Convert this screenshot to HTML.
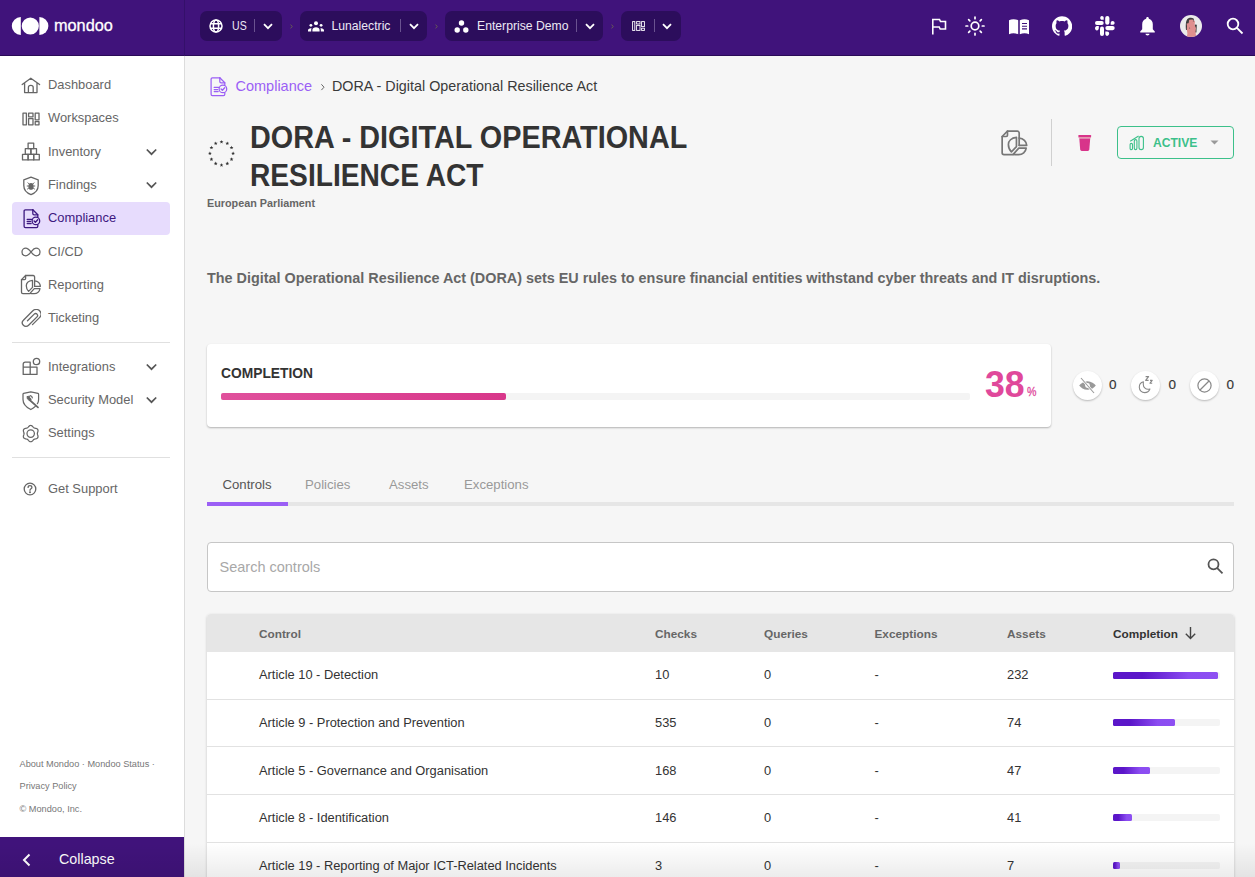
<!DOCTYPE html>
<html><head><meta charset="utf-8">
<style>
*{box-sizing:border-box;margin:0;padding:0}
html,body{width:1255px;height:877px;overflow:hidden;background:#f6f6f6;font-family:"Liberation Sans",sans-serif;position:relative}
.a{position:absolute;white-space:nowrap}
#hdr{position:absolute;left:0;top:0;width:1255px;height:56px;background:#40137b;border-bottom:1px solid #2a0a57}
#side{position:absolute;left:0;top:56px;width:185px;height:821px;background:#fff;border-right:1px solid #dcdcdc}
.pill{position:absolute;top:11px;height:30px;border-radius:7px;background:#2c0d5c}
.ptxt{position:absolute;top:0;line-height:30px;font-size:12.2px;color:#ece8f4}
.pdiv{position:absolute;top:8px;width:1px;height:13px;background:#6a5290}
.sep{position:absolute;top:22px;color:#7d7a5a;font-size:9px}
.nav{position:absolute;left:48px;font-size:12.9px;color:#666;line-height:16px}
.chev{position:absolute;left:145px}
.hdiv{position:absolute;left:12px;width:158px;height:1px;background:#e0e0e0}
.foot{position:absolute;left:19.5px;font-size:9.2px;color:#777}
.th{position:absolute;top:626px;font-size:11.8px;font-weight:bold;color:#666;line-height:16px}
.td{position:absolute;font-size:12.85px;color:#333;line-height:16px}
.rowline{position:absolute;left:207px;width:1027px;height:1px;background:#e2e2e2}
.bar{position:absolute;left:1113px;height:7px;border-radius:1.5px;background:linear-gradient(90deg,#5b16c9 0%,#5b16c9 28%,#8b4cf1 72%,#8d4ff2 100%)}
.track{position:absolute;left:1113px;width:107px;height:7px;border-radius:2px;background:#f4f4f4}
</style></head><body>
<div id="hdr">
<svg class="a" style="left:0;top:0" width="120" height="56" viewBox="0 0 120 56">
<path d="M20.8 17 A9 9 0 0 0 20.8 35 Z" fill="#fff"/>
<circle cx="30.3" cy="26" r="8.6" fill="#fff"/>
<path d="M39.4 17 A9 9 0 0 1 39.4 35 Z" fill="#fff"/>
</svg>
<div class="a" style="left:54px;top:16px;font-size:16.3px;line-height:18px;color:#fff;-webkit-text-stroke:0.3px #fff">mondoo</div>
<div style="position:absolute;left:184px;top:0;width:1px;height:56px;background:#34106a"></div>

<div class="pill" style="left:200px;width:82px">
 <svg class="a" style="left:9px;top:8px" width="14" height="14" viewBox="0 0 14 14" fill="none" stroke="#fff" stroke-width="1.5"><circle cx="7" cy="7" r="6"/><ellipse cx="7" cy="7" rx="2.6" ry="6"/><path d="M1.3 4.8H12.7M1.3 9.2H12.7"/></svg>
 <div class="ptxt" style="left:31.5px;font-size:12px;transform-origin:0 0;transform:scaleX(0.88)">US</div>
 <div class="pdiv" style="left:54px"></div>
 <svg class="a" style="left:63px;top:12px" width="10" height="7" viewBox="0 0 10 7" fill="none" stroke="#fff" stroke-width="1.8"><path d="M1 1.2L5 5.2L9 1.2"/></svg>
</div>
<svg class="a" style="left:289px;top:23px" width="5" height="7" viewBox="0 0 5 7" fill="none" stroke="#6a6250" stroke-width="0.9"><path d="M1.6 1.6L3.2 3.5L1.6 5.4"/></svg>

<div class="pill" style="left:300px;width:127px">
 <svg class="a" style="left:8px;top:10px" width="16" height="11" viewBox="0 0 16 11" fill="#fff"><circle cx="8" cy="2.3" r="2"/><circle cx="2.9" cy="4.3" r="1.4"/><circle cx="13.1" cy="4.3" r="1.4"/><path d="M4.4 10.4V8.8C4.4 7.2 6 6.2 8 6.2S11.6 7.2 11.6 8.8V10.4Z"/><path d="M0 10.4V9.4C0 8.2 1.2 7.2 2.8 7.2C3.2 7.2 3.5 7.3 3.6 7.3C3.3 7.8 3.2 8.3 3.2 8.8V10.4Z"/><path d="M16 10.4V9.4C16 8.2 14.8 7.2 13.2 7.2C12.8 7.2 12.5 7.3 12.4 7.3C12.7 7.8 12.8 8.3 12.8 8.8V10.4Z"/></svg>
 <div class="ptxt" style="left:31.5px">Lunalectric</div>
 <div class="pdiv" style="left:100px"></div>
 <svg class="a" style="left:109px;top:12px" width="10" height="7" viewBox="0 0 10 7" fill="none" stroke="#fff" stroke-width="1.8"><path d="M1 1.2L5 5.2L9 1.2"/></svg>
</div>
<svg class="a" style="left:434px;top:23px" width="5" height="7" viewBox="0 0 5 7" fill="none" stroke="#6a6250" stroke-width="0.9"><path d="M1.6 1.6L3.2 3.5L1.6 5.4"/></svg>

<div class="pill" style="left:445px;width:158px">
 <svg class="a" style="left:8.5px;top:7.5px" width="15" height="15" viewBox="0 0 15 15" fill="#fff"><circle cx="7.5" cy="4" r="2.7"/><circle cx="3.2" cy="11" r="2.7"/><circle cx="11.8" cy="11" r="2.7"/></svg>
 <div class="ptxt" style="left:32px">Enterprise Demo</div>
 <div class="pdiv" style="left:131px"></div>
 <svg class="a" style="left:140px;top:12px" width="10" height="7" viewBox="0 0 10 7" fill="none" stroke="#fff" stroke-width="1.8"><path d="M1 1.2L5 5.2L9 1.2"/></svg>
</div>
<svg class="a" style="left:610px;top:23px" width="5" height="7" viewBox="0 0 5 7" fill="none" stroke="#6a6250" stroke-width="0.9"><path d="M1.6 1.6L3.2 3.5L1.6 5.4"/></svg>

<div class="pill" style="left:621px;width:60px">
 <svg class="a" style="left:11px;top:10px" width="13" height="10" viewBox="0 0 13 10" fill="none" stroke="#fff" stroke-width="0.9"><rect x="0.6" y="0.6" width="2.2" height="8.8"/><rect x="4.6" y="0.6" width="3.4" height="2.4"/><rect x="4.6" y="4.4" width="3.4" height="5"/><rect x="9.6" y="0.6" width="2.8" height="5"/><rect x="9.6" y="7.2" width="2.8" height="2.2"/></svg>
 <div class="pdiv" style="left:33px"></div>
 <svg class="a" style="left:41px;top:12px" width="10" height="7" viewBox="0 0 10 7" fill="none" stroke="#fff" stroke-width="1.8"><path d="M1 1.2L5 5.2L9 1.2"/></svg>
</div>

<!-- right icons -->
<svg class="a" style="left:931px;top:18px" width="16" height="17" viewBox="0 0 16 17" fill="none" stroke="#fff" stroke-width="1.6"><path d="M1.8 16.5V1.5H8.5L9.5 3.5H14.5V11H9.2L8.2 9H1.8"/></svg>
<svg class="a" style="left:964px;top:15px" width="22" height="22" viewBox="0 0 22 22" fill="none" stroke="#fff" stroke-width="1.7" stroke-linecap="round"><circle cx="11" cy="11" r="3.8"/><path d="M11.00 3.70L11.00 2.00M16.16 5.84L17.36 4.64M18.30 11.00L20.00 11.00M16.16 16.16L17.36 17.36M11.00 18.30L11.00 20.00M5.84 16.16L4.64 17.36M3.70 11.00L2.00 11.00M5.84 5.84L4.64 4.64"/></svg>
<svg class="a" style="left:1008px;top:18px" width="22" height="17" viewBox="0 0 22 17" fill="#fff"><path d="M1 2.2C3.5 1 7 0.8 10.2 2.2V16.2C7 15 3.5 15.1 1 16.2Z"/><path d="M11.8 2.2C15 0.8 18.5 1 21 2.2V16.2C18.5 15.1 15 15 11.8 16.2Z"/><path d="M14 5.5H19M14 8.2H19M14 10.9H19" stroke="#40137b" stroke-width="1.1"/></svg>
<svg class="a" style="left:1052px;top:16px" width="20" height="20" viewBox="0 0 16 16" fill="#fff"><path d="M8 0.2C3.6 0.2 0 3.8 0 8.2c0 3.5 2.3 6.5 5.5 7.6.4.1.5-.2.5-.4v-1.4c-2.2.5-2.7-1-2.7-1-.4-.9-.9-1.2-.9-1.2-.7-.5.1-.5.1-.5.8.1 1.2.8 1.2.8.7 1.2 1.9.9 2.3.7.1-.5.3-.9.5-1.1-1.8-.2-3.6-.9-3.6-4 0-.9.3-1.6.8-2.1-.1-.2-.4-1 .1-2.1 0 0 .7-.2 2.2.8.6-.2 1.3-.3 2-.3s1.4.1 2 .3c1.5-1 2.2-.8 2.2-.8.4 1.1.2 1.9.1 2.1.5.6.8 1.3.8 2.1 0 3.1-1.9 3.8-3.6 4 .3.3.6.8.6 1.5v2.2c0 .2.1.5.6.4 3.2-1.1 5.5-4.1 5.5-7.6C16 3.8 12.4 0.2 8 0.2z"/></svg>
<svg class="a" style="left:1095px;top:16px" width="20" height="20" viewBox="0 0 20 20" fill="#fff">
<path d="M8.7 3.7H6.9C5.9 3.7 5.2 2.9 5.2 1.9S5.9 0 6.9 0S8.7 0.8 8.7 1.8Z"/>
<rect x="10.2" y="0" width="4.2" height="8.8" rx="2.1"/>
<rect x="0" y="5.1" width="8.7" height="3.8" rx="1.9"/>
<path d="M15.7 8.8V7C15.7 6 16.5 5.1 17.6 5.1S19.6 6 19.6 7S18.7 8.8 17.6 8.8Z"/>
<path d="M3.8 10V12.3C3.8 13.5 3 14.4 1.9 14.4S0 13.5 0 12.3S0.9 10 1.9 10Z"/>
<rect x="5" y="10.4" width="4" height="9.5" rx="2"/>
<rect x="10.3" y="10" width="9.4" height="4.2" rx="2.1"/>
<path d="M10.3 15.5H12.2C13.3 15.5 14.2 16.4 14.2 17.6S13.3 19.9 12.2 19.9S10.3 19 10.3 17.6Z"/>
</svg>
<svg class="a" style="left:1139px;top:16px" width="17" height="20" viewBox="0 0 17 20" fill="#fff"><path d="M8.5 1C9.3 1 9.8 1.6 9.8 2.3V2.8C12.3 3.4 13.8 5.6 13.8 8.2V13.3L15.8 15.5V16.5H1.2V15.5L3.2 13.3V8.2C3.2 5.6 4.7 3.4 7.2 2.8V2.3C7.2 1.6 7.7 1 8.5 1Z"/><path d="M6.5 17.8H10.5C10.5 18.9 9.6 19.5 8.5 19.5S6.5 18.9 6.5 17.8Z"/></svg>
<svg class="a" style="left:1180px;top:15px" width="22" height="22" viewBox="0 0 22 22"><defs><clipPath id="av"><circle cx="11" cy="11" r="11"/></clipPath></defs><g clip-path="url(#av)"><rect width="22" height="22" fill="#ebebeb"/><path d="M6 15C5.6 11 5.6 6 7.4 4C9 2.4 12 2.2 13.6 3.6L14.2 6L8.6 8.5L8.4 15Z" fill="#3e3e3e"/><path d="M14.6 9.5L16.8 9.8L16.4 17.5L14.6 17.5Z" fill="#3e3e3e"/><path d="M9.2 4.8L12.4 4.4L15 6.2L14.6 10L16 13L15.5 17L16.4 23H6.6L7.4 18.5L6.8 14.5L7 11L6.6 8.6L8.6 8.2Z" fill="#df8f8e"/><circle cx="13.4" cy="6" r="0.5" fill="#555"/><circle cx="9.6" cy="13" r="0.5" fill="#555"/></g></svg>
<svg class="a" style="left:1226px;top:17px" width="18" height="18" viewBox="0 0 18 18" fill="none" stroke="#fff" stroke-width="1.8"><circle cx="7" cy="7" r="5.3"/><path d="M10.9 10.9L16.5 16.5"/></svg>
</div>
<div id="side"></div>
<svg class="a" style="left:21px;top:77px" width="20" height="17" viewBox="0 0 20 17" stroke="#666" stroke-width="1.3" fill="none" stroke-linejoin="round" stroke-linecap="round"><path d="M1.2 7.5L9.8 1.2L18.6 7.5M3.6 6V15.6H16V6M7.4 15.6V10.4C7.4 9.3 8.3 8.3 9.8 8.3S12.2 9.3 12.2 10.4V15.6"/></svg>
<div class="nav" style="top:76.6px">Dashboard</div>
<svg class="a" style="left:22px;top:112px" width="18" height="14" viewBox="0 0 18 14" stroke="#666" stroke-width="1.3" fill="none" stroke-linejoin="round" stroke-linecap="round" stroke-width="1.1"><rect x="1" y="1.2" width="3.4" height="11.6"/><rect x="6.6" y="1.2" width="4.4" height="3.6"/><rect x="6.6" y="6.6" width="4.4" height="6.2"/><rect x="13.2" y="1.2" width="3.8" height="6.6"/><rect x="13.2" y="9.6" width="3.8" height="3.2"/></svg>
<div class="nav" style="top:110px">Workspaces</div>
<svg class="a" style="left:21px;top:142px" width="20" height="19" viewBox="0 0 20 19" stroke="#666" stroke-width="1.3" fill="none" stroke-linejoin="round" stroke-linecap="round" stroke-width="1.1"><rect x="1.5" y="12.3" width="5.6" height="5.6"/><rect x="7.1" y="12.3" width="5.6" height="5.6"/><rect x="12.7" y="12.3" width="5.6" height="5.6"/><rect x="4.3" y="6.7" width="5.6" height="5.6"/><rect x="9.9" y="6.7" width="5.6" height="5.6"/><rect x="7.1" y="1.1" width="5.6" height="5.6"/></svg>
<div class="nav" style="top:143.7px">Inventory</div>
<svg class="a" style="left:145px;top:148.2px" width="13" height="8" viewBox="0 0 13 8" fill="none" stroke="#555" stroke-width="1.7"><path d="M1.8 1.5L6.5 6.2L11.2 1.5"/></svg>
<svg class="a" style="left:22px;top:176px" width="18" height="20" viewBox="0 0 18 20" stroke="#666" stroke-width="1.3" fill="none" stroke-linejoin="round" stroke-linecap="round"><path d="M9 1.2L16.2 3.8V9.6C16.2 14 13 17.2 9 18.6C5 17.2 1.8 14 1.8 9.6V3.8Z"/><ellipse cx="9" cy="10.4" rx="2.6" ry="3.4" fill="#666" stroke="none"/><path d="M6 6.8L7.2 8M12 6.8L10.8 8M5.2 10H6.4M11.6 10H12.8M5.5 13L6.6 12.2M12.5 13L11.4 12.2" stroke-width="1"/></svg>
<div class="nav" style="top:176.7px">Findings</div>
<svg class="a" style="left:145px;top:181.2px" width="13" height="8" viewBox="0 0 13 8" fill="none" stroke="#555" stroke-width="1.7"><path d="M1.8 1.5L6.5 6.2L11.2 1.5"/></svg>
<div class="a" style="left:12px;top:202px;width:158px;height:33px;background:#e7dcfd;border-radius:4px"></div>
<svg class="a" style="left:22px;top:208px" width="20" height="21" viewBox="0 0 20 21" fill="none" stroke="#3d1880" stroke-width="1.3" stroke-linejoin="round" stroke-linecap="round"><path d="M10.8 1.8H3.4C2.6 1.8 2.1 2.3 2.1 3.1V18.3C2.1 19.1 2.6 19.6 3.4 19.6H14.5C15.3 19.6 15.8 19.1 15.8 18.3V16.6"/><path d="M10.8 1.8L15.8 6.8V9.1"/><path d="M10.8 1.8V5.5C10.8 6.2 11.4 6.8 12.1 6.8H15.8"/><path d="M5.2 11.4H9.6M5.2 13.5H8.6M5.2 15.6H9.2"/><circle cx="13.9" cy="12.9" r="3.8" fill="#e7dcfd"/><path d="M12.1 12.9L13.4 14.2L15.7 11.8" stroke-width="1.4"/></svg>
<div class="nav" style="top:210px;color:#3d1880">Compliance</div>
<svg class="a" style="left:21px;top:247px" width="20" height="10" viewBox="0 0 20 10" stroke="#666" stroke-width="1.3" fill="none" stroke-linejoin="round" stroke-linecap="round" stroke-width="1.4"><path d="M10 5C8 2.5 6.8 1.2 4.8 1.2S1 2.8 1 5S2.6 8.8 4.8 8.8S8 7.5 10 5S12.8 1.2 15 1.2S19 2.8 19 5S17.4 8.8 15.2 8.8S12 7.5 10 5Z"/></svg>
<div class="nav" style="top:243.5px">CI/CD</div>
<svg class="a" style="left:16px;top:270px" width="30" height="30" viewBox="0 0 30 30" stroke="#666" stroke-width="1.3" fill="none" stroke-linejoin="round" stroke-linecap="round"><path d="M18.6 16.4V7C18.6 6.2 18 5.5 17.2 5.5H9.6L5.5 9.6V22.2C5.5 23 6.1 23.6 6.9 23.6H13.8"/><path d="M9.6 5.5V8.6C9.6 9.1 9.2 9.6 8.6 9.6H5.5"/><path d="M18.6 10.8C21.8 11 24.2 13.4 24.4 16.4H18.6"/><path d="M16.5 10.3V17.4L12.6 21.4C11.2 20 10.3 18 10.3 15.8C10.3 13 12.6 10.7 16.5 10.3Z"/><path d="M14 23.4L18.3 18.6H24C23.6 21.4 21.2 23.6 18.2 23.6C16.8 23.6 15.4 23.6 14 23.4Z"/></svg>
<div class="nav" style="top:276.6px">Reporting</div>
<svg class="a" style="left:21px;top:309px" width="20" height="19" viewBox="0 0 20 19" stroke="#666" stroke-width="1.3" fill="none" stroke-linejoin="round" stroke-linecap="round" stroke-width="1.2"><path d="M6.5 11.8L13.2 5.1C14 4.3 15.3 4.3 16 5.1S16.8 7.1 16 7.9L7.6 16.3C6.1 17.8 3.8 17.8 2.4 16.3S0.9 12.6 2.4 11.2L11.6 2C13.7-0.1 17-0.1 18.8 2S20.3 6.8 18.5 8.6L11.5 15.6"/></svg>
<div class="nav" style="top:310px">Ticketing</div>
<svg class="a" style="left:22px;top:357px" width="19" height="19" viewBox="0 0 19 19" stroke="#666" stroke-width="1.3" fill="none" stroke-linejoin="round" stroke-linecap="round" stroke-width="1.2"><path d="M1.2 10.2V17.4H15V10.2H8.2V5.2H3.2C2 5.2 1.2 6 1.2 7.2V10.2H8.2V17.4"/><circle cx="14.5" cy="4.5" r="3.2"/></svg>
<div class="nav" style="top:358.7px">Integrations</div>
<svg class="a" style="left:145px;top:363.2px" width="13" height="8" viewBox="0 0 13 8" fill="none" stroke="#555" stroke-width="1.7"><path d="M1.8 1.5L6.5 6.2L11.2 1.5"/></svg>
<svg class="a" style="left:22px;top:390px" width="18" height="21" viewBox="0 0 18 21" stroke="#666" stroke-width="1.25" fill="none" stroke-linejoin="round" stroke-linecap="round"><path d="M15.4 13.6C16.2 12.3 16.6 10.9 16.6 9.4V4.2C16.6 3.8 16.4 3.5 16 3.4L8.8 1.9L1.6 3.4C1.2 3.5 1 3.8 1 4.2V9.4C1 13.6 4.2 17.2 8.8 19.5C10.6 18.6 12.1 17.6 13.3 16.4"/><path d="M7.6 10L16 17.4" stroke-width="1.7"/><path d="M5.3 6.6C4.9 7.6 5.2 8.9 6.1 9.6C6.9 10.3 8.1 10.5 9.1 10.1L8.8 8.6L7.6 7.8L7.6 6.4C6.7 6.2 5.9 6.3 5.3 6.6Z" fill="#666" stroke-width="1"/><path d="M8.2 5.6C9.3 5.8 10.2 6.7 10.3 7.8" stroke-width="1.3"/></svg>
<div class="nav" style="top:392px">Security Model</div>
<svg class="a" style="left:145px;top:395.8px" width="13" height="8" viewBox="0 0 13 8" fill="none" stroke="#555" stroke-width="1.7"><path d="M1.8 1.5L6.5 6.2L11.2 1.5"/></svg>
<svg class="a" style="left:21px;top:424px" width="20" height="20" viewBox="0 0 20 20" stroke="#666" stroke-width="1.25" fill="none" stroke-linejoin="round"><path d="M16.35 9.60 L16.38 9.25 L16.46 8.89 L16.57 8.51 L16.71 8.11 L16.85 7.68 L16.96 7.24 L17.02 6.79 L17.01 6.34 L16.93 5.92 L16.76 5.53 L16.50 5.18 L16.18 4.89 L15.79 4.67 L15.37 4.49 L14.93 4.37 L14.50 4.27 L14.08 4.19 L13.69 4.10 L13.34 3.99 L13.03 3.84 L12.74 3.64 L12.46 3.39 L12.19 3.10 L11.92 2.78 L11.62 2.45 L11.29 2.14 L10.93 1.86 L10.54 1.64 L10.12 1.50 L9.70 1.45 L9.28 1.50 L8.86 1.64 L8.47 1.86 L8.11 2.14 L7.78 2.45 L7.48 2.78 L7.21 3.10 L6.94 3.39 L6.66 3.64 L6.38 3.84 L6.06 3.99 L5.71 4.10 L5.32 4.19 L4.90 4.27 L4.47 4.37 L4.03 4.49 L3.61 4.67 L3.22 4.89 L2.90 5.18 L2.64 5.53 L2.47 5.92 L2.39 6.34 L2.38 6.79 L2.44 7.24 L2.55 7.68 L2.69 8.11 L2.83 8.51 L2.94 8.89 L3.02 9.25 L3.05 9.60 L3.02 9.95 L2.94 10.31 L2.83 10.69 L2.69 11.09 L2.55 11.52 L2.44 11.96 L2.38 12.41 L2.39 12.86 L2.47 13.28 L2.64 13.67 L2.90 14.02 L3.22 14.31 L3.61 14.53 L4.03 14.71 L4.47 14.83 L4.90 14.93 L5.32 15.01 L5.71 15.10 L6.06 15.21 L6.37 15.36 L6.66 15.56 L6.94 15.81 L7.21 16.10 L7.48 16.42 L7.78 16.75 L8.11 17.06 L8.47 17.34 L8.86 17.56 L9.28 17.70 L9.70 17.75 L10.12 17.70 L10.54 17.56 L10.93 17.34 L11.29 17.06 L11.62 16.75 L11.92 16.42 L12.19 16.10 L12.46 15.81 L12.74 15.56 L13.03 15.36 L13.34 15.21 L13.69 15.10 L14.08 15.01 L14.50 14.93 L14.93 14.83 L15.37 14.71 L15.79 14.53 L16.18 14.31 L16.50 14.02 L16.76 13.67 L16.93 13.28 L17.01 12.86 L17.02 12.41 L16.96 11.96 L16.85 11.52 L16.71 11.09 L16.57 10.69 L16.46 10.31 L16.38 9.95 L16.35 9.60Z"/><circle cx="9.7" cy="9.6" r="3.7"/></svg>
<div class="nav" style="top:424.8px">Settings</div>
<svg class="a" style="left:23px;top:482px" width="14" height="14" viewBox="0 0 14 14" stroke="#666" stroke-width="1.3" fill="none" stroke-linejoin="round" stroke-linecap="round" stroke-width="1.1"><circle cx="7" cy="7" r="5.8"/><path d="M5.1 5.4C5.1 4.3 6 3.6 7 3.6S8.9 4.3 8.9 5.4C8.9 6.8 7 6.8 7 8.3"/><circle cx="7" cy="10.2" r="0.4" fill="#666"/></svg>
<div class="nav" style="top:480.8px">Get Support</div>
<div class="hdiv" style="top:342px"></div>
<div class="hdiv" style="top:457px"></div>
<div class="foot" style="top:759px">About Mondoo · Mondoo Status ·</div>
<div class="foot" style="top:781px">Privacy Policy</div>
<div class="foot" style="top:804px">© Mondoo, Inc.</div>
<div class="a" style="left:0;top:837px;width:184px;height:40px;background:#40137b"></div>
<svg class="a" style="left:21px;top:853px" width="11" height="14" viewBox="0 0 11 14" fill="none" stroke="#fff" stroke-width="2"><path d="M8.5 1.5L3 7L8.5 12.5"/></svg>
<div class="a" style="left:59px;top:850px;font-size:14.3px;line-height:18px;color:#fff">Collapse</div>
<!-- MAIN -->
<svg class="a" style="left:209px;top:76px" width="20" height="21" viewBox="0 0 20 21" fill="none" stroke="#9b5ff5" stroke-width="1.25" stroke-linejoin="round" stroke-linecap="round"><path d="M10.8 1.8H3.4C2.6 1.8 2.1 2.3 2.1 3.1V18.3C2.1 19.1 2.6 19.6 3.4 19.6H14.5C15.3 19.6 15.8 19.1 15.8 18.3V16.6"/><path d="M10.8 1.8L15.8 6.8V9.1"/><path d="M10.8 1.8V5.5C10.8 6.2 11.4 6.8 12.1 6.8H15.8"/><path d="M5.2 11.4H9.6M5.2 13.5H8.6M5.2 15.6H9.2"/><circle cx="13.9" cy="12.9" r="3.8" fill="#f6f6f6"/><path d="M12.1 12.9L13.4 14.2L15.7 11.8" stroke-width="1.35"/></svg>
<div class="a" style="left:235.5px;top:77px;font-size:14.5px;line-height:18px;color:#9b5ff5">Compliance</div>
<svg class="a" style="left:320px;top:83px" width="6" height="8" viewBox="0 0 6 8" fill="none" stroke="#666" stroke-width="1"><path d="M1.4 1.3L4 4.2L1.4 7.1"/></svg>
<div class="a" style="left:332px;top:77px;font-size:14.34px;line-height:18px;color:#3a3a3a">DORA - Digital Operational Resilience Act</div>

<svg class="a" style="left:207px;top:139px" width="29" height="29" viewBox="0 0 29 29" fill="#333"><polygon points="14.50,0.90 15.00,2.21 16.40,2.28 15.31,3.16 15.68,4.52 14.50,3.75 13.32,4.52 13.69,3.16 12.60,2.28 14.00,2.21"/><polygon points="20.30,2.45 20.80,3.77 22.20,3.84 21.11,4.72 21.48,6.07 20.30,5.30 19.12,6.07 19.49,4.72 18.40,3.84 19.80,3.77"/><polygon points="24.55,6.70 25.05,8.01 26.45,8.08 25.35,8.96 25.72,10.32 24.55,9.55 23.37,10.32 23.74,8.96 22.64,8.08 24.05,8.01"/><polygon points="26.10,12.50 26.60,13.81 28.00,13.88 26.91,14.76 27.28,16.12 26.10,15.35 24.92,16.12 25.29,14.76 24.20,13.88 25.60,13.81"/><polygon points="24.55,18.30 25.05,19.61 26.45,19.68 25.35,20.56 25.72,21.92 24.55,21.15 23.37,21.92 23.74,20.56 22.64,19.68 24.05,19.61"/><polygon points="20.30,22.55 20.80,23.86 22.20,23.93 21.11,24.81 21.48,26.16 20.30,25.40 19.12,26.16 19.49,24.81 18.40,23.93 19.80,23.86"/><polygon points="14.50,24.10 15.00,25.41 16.40,25.48 15.31,26.36 15.68,27.72 14.50,26.95 13.32,27.72 13.69,26.36 12.60,25.48 14.00,25.41"/><polygon points="8.70,22.55 9.20,23.86 10.60,23.93 9.51,24.81 9.88,26.16 8.70,25.40 7.52,26.16 7.89,24.81 6.80,23.93 8.20,23.86"/><polygon points="4.45,18.30 4.95,19.61 6.36,19.68 5.26,20.56 5.63,21.92 4.45,21.15 3.28,21.92 3.65,20.56 2.55,19.68 3.95,19.61"/><polygon points="2.90,12.50 3.40,13.81 4.80,13.88 3.71,14.76 4.08,16.12 2.90,15.35 1.72,16.12 2.09,14.76 1.00,13.88 2.40,13.81"/><polygon points="4.45,6.70 4.95,8.01 6.36,8.08 5.26,8.96 5.63,10.32 4.45,9.55 3.28,10.32 3.65,8.96 2.55,8.08 3.95,8.01"/><polygon points="8.70,2.45 9.20,3.77 10.60,3.84 9.51,4.72 9.88,6.07 8.70,5.30 7.52,6.07 7.89,4.72 6.80,3.84 8.20,3.77"/></svg>
<div class="a" style="left:250px;top:119px;font-size:31px;line-height:38px;font-weight:bold;color:#333;transform-origin:0 0;transform:scaleX(0.929)">DORA - DIGITAL OPERATIONAL</div>
<div class="a" style="left:250px;top:157px;font-size:31px;line-height:38px;font-weight:bold;color:#333;transform-origin:0 0;transform:scaleX(0.908)">RESILIENCE ACT</div>
<div class="a" style="left:207px;top:196px;font-size:10.8px;line-height:14px;font-weight:bold;color:#666">European Parliament</div>

<svg class="a" style="left:995px;top:123.5px" width="39" height="39" viewBox="0 0 30 30" stroke="#777" stroke-width="1.3" fill="none" stroke-linejoin="round" stroke-linecap="round"><path d="M18.6 16.4V7C18.6 6.2 18 5.5 17.2 5.5H9.6L5.5 9.6V22.2C5.5 23 6.1 23.6 6.9 23.6H13.8"/><path d="M9.6 5.5V8.6C9.6 9.1 9.2 9.6 8.6 9.6H5.5"/><path d="M18.6 10.8C21.8 11 24.2 13.4 24.4 16.4H18.6"/><path d="M16.5 10.3V17.4L12.6 21.4C11.2 20 10.3 18 10.3 15.8C10.3 13 12.6 10.7 16.5 10.3Z"/><path d="M14 23.4L18.3 18.6H24C23.6 21.4 21.2 23.6 18.2 23.6C16.8 23.6 15.4 23.6 14 23.4Z"/></svg>
<div class="a" style="left:1051px;top:119px;width:1px;height:47px;background:#d0d0d0"></div>
<svg class="a" style="left:1078px;top:134px" width="14" height="18" viewBox="0 0 14 18"><rect x="0.4" y="0.9" width="12.7" height="2.6" rx="0.6" fill="#d8348a"/><rect x="0.9" y="3.3" width="11.7" height="1.1" fill="#e59aa8"/><path d="M1.3 4.4H12.2L11.3 15.6C11.2 16.4 10.6 16.9 9.8 16.9H3.7C2.9 16.9 2.3 16.4 2.2 15.6Z" fill="#d8348a"/></svg>
<div class="a" style="left:1117px;top:126px;width:117px;height:33px;border:1.5px solid #3cc08a;border-radius:4px"></div>
<svg class="a" style="left:1129px;top:135px" width="16" height="16" viewBox="0 0 16 16" fill="none" stroke="#3cc08a" stroke-width="1.1"><rect x="1.1" y="8.4" width="2.4" height="6.2" rx="1.2"/><rect x="5.3" y="4.6" width="2.6" height="10" rx="1.3"/><rect x="10" y="1.4" width="4.4" height="13.2" rx="2.2"/><path d="M1.2 6.2L6 3.2L9.6 1"/></svg>
<div class="a" style="left:1153px;top:134px;font-size:13px;line-height:17px;font-weight:bold;color:#3cc08a;transform-origin:0 0;transform:scaleX(0.93)">ACTIVE</div>
<svg class="a" style="left:1210px;top:140px" width="9" height="5" viewBox="0 0 9 5" fill="#999"><path d="M0.5 0.5H8.5L4.5 4.5Z"/></svg>

<div class="a" style="left:207px;top:269px;font-size:14.39px;line-height:18px;font-weight:bold;color:#666">The Digital Operational Resilience Act (DORA) sets EU rules to ensure financial entities withstand cyber threats and IT disruptions.</div>

<div class="a" style="left:207px;top:344px;width:844px;height:83px;background:#fff;border-radius:4px;box-shadow:0 1px 2px rgba(0,0,0,0.28)"></div>
<div class="a" style="left:221px;top:366px;font-size:13.8px;line-height:16px;font-weight:bold;color:#333">COMPLETION</div>
<div class="a" style="left:221px;top:393px;width:749px;height:7px;background:#f4f4f4;border-radius:2px"></div>
<div class="a" style="left:221px;top:393px;width:285px;height:7px;background:linear-gradient(90deg,#e0509c,#d8378a);border-radius:2px"></div>
<div class="a" style="left:984.5px;top:363px;font-size:37.5px;line-height:42px;font-weight:bold;color:#e0489b;transform-origin:0 0;transform:scaleX(0.95)">38</div>
<div class="a" style="left:1027px;top:385px;font-size:12.5px;line-height:14px;color:#e0489b;-webkit-text-stroke:0.3px #e0489b;transform-origin:0 0;transform:scaleX(0.85)">%</div>

<div class="a" style="left:1073px;top:371px;width:29px;height:29px;border-radius:50%;background:#fff;box-shadow:0 1px 2px rgba(0,0,0,0.25)"></div>
<svg class="a" style="left:1077px;top:375px" width="21" height="21" viewBox="0 0 21 21"><path d="M10.5 6.2C14.3 6.2 17.2 8.5 18.8 10.5C17.2 12.5 14.3 14.8 10.5 14.8S3.8 12.5 2.2 10.5C3.8 8.5 6.7 6.2 10.5 6.2Z" fill="#999"/><circle cx="10.5" cy="10.5" r="2.4" fill="#fff"/><path d="M4 3L17 18" stroke="#fff" stroke-width="2.4"/><path d="M4 3L17 18" stroke="#999" stroke-width="1.1"/></svg>
<div class="a" style="left:1109px;top:377px;font-size:13.5px;line-height:15px;color:#333;-webkit-text-stroke:0.15px #333">0</div>
<div class="a" style="left:1131px;top:371px;width:29px;height:29px;border-radius:50%;background:#fff;box-shadow:0 1px 2px rgba(0,0,0,0.25)"></div>
<svg class="a" style="left:1135px;top:375px" width="21" height="21" viewBox="0 0 21 21" fill="none" stroke="#888" stroke-width="1.1" stroke-linejoin="round"><path d="M8.4 6.8C6 7.4 4.3 9.6 4.3 12.2C4.3 15.2 6.7 17.6 9.7 17.6C12.1 17.6 14.1 16.1 14.9 14C14.3 14.2 13.7 14.3 13.1 14.3C10.5 14.3 8.3 12.2 8.3 9.5C8.3 8.6 8.3 7.6 8.4 6.8Z"/><path d="M10.6 1.6H13.6L10.6 5.4H13.6M15 5.4H17.2L15 8.2H17.2"/></svg>
<div class="a" style="left:1168.5px;top:377px;font-size:13.5px;line-height:15px;color:#333;-webkit-text-stroke:0.15px #333">0</div>
<div class="a" style="left:1190px;top:371px;width:29px;height:29px;border-radius:50%;background:#fff;box-shadow:0 1px 2px rgba(0,0,0,0.25)"></div>
<svg class="a" style="left:1194px;top:375px" width="21" height="21" viewBox="0 0 21 21" fill="none" stroke="#888" stroke-width="1.2"><circle cx="10.5" cy="10.5" r="6.6"/><path d="M6 15L15 6"/></svg>
<div class="a" style="left:1226.5px;top:377px;font-size:13.5px;line-height:15px;color:#333;-webkit-text-stroke:0.15px #333">0</div>

<div class="a" style="left:207px;top:502px;width:1027px;height:4px;background:#e6e6e6"></div>
<div class="a" style="left:207px;top:502px;width:81px;height:4px;background:#9b5ff5"></div>
<div class="a" style="left:222.5px;top:477px;font-size:13.2px;line-height:16px;color:#555">Controls</div>
<div class="a" style="left:305px;top:477px;font-size:13.2px;line-height:16px;color:#999">Policies</div>
<div class="a" style="left:389px;top:477px;font-size:13.2px;line-height:16px;color:#999">Assets</div>
<div class="a" style="left:464px;top:477px;font-size:13.2px;line-height:16px;color:#999">Exceptions</div>

<div class="a" style="left:207px;top:542px;width:1027px;height:50px;background:#fff;border:1px solid #c6c6c6;border-radius:4px"></div>
<div class="a" style="left:219.5px;top:558px;font-size:14.5px;line-height:18px;color:#a8a8a8">Search controls</div>
<svg class="a" style="left:1205px;top:556px" width="20" height="20" viewBox="0 0 20 20" fill="none" stroke="#555" stroke-width="1.8"><circle cx="8.5" cy="8.3" r="5"/><path d="M12 11.8L17.5 17.3"/></svg>

<div class="a" style="left:207px;top:614px;width:1027px;height:270px;background:#fff;border-radius:4px 4px 0 0;box-shadow:0 1px 3px rgba(0,0,0,0.2)"></div>
<div class="a" style="left:207px;top:614px;width:1027px;height:38px;background:#e6e6e6;border-radius:4px 4px 0 0"></div>
<div class="th" style="left:259px">Control</div>
<div class="th" style="left:655px">Checks</div>
<div class="th" style="left:764px">Queries</div>
<div class="th" style="left:874.5px">Exceptions</div>
<div class="th" style="left:1007px">Assets</div>
<div class="th" style="left:1113px;color:#333">Completion</div>
<svg class="a" style="left:1184px;top:626px" width="13" height="14" viewBox="0 0 13 14" fill="none" stroke="#444" stroke-width="1.4"><path d="M6.5 1V12.5M1.8 7.8L6.5 12.5L11.2 7.8"/></svg>
<div class="td" style="left:259px;top:667px">Article 10 - Detection</div><div class="td" style="left:655px;top:667px">10</div><div class="td" style="left:764px;top:667px">0</div><div class="td" style="left:874.5px;top:667px">-</div><div class="td" style="left:1007px;top:667px">232</div><div class="track" style="top:671.5px"></div><div class="bar" style="top:671.5px;width:105px"></div>
<div class="td" style="left:259px;top:714.5px">Article 9 - Protection and Prevention</div><div class="td" style="left:655px;top:714.5px">535</div><div class="td" style="left:764px;top:714.5px">0</div><div class="td" style="left:874.5px;top:714.5px">-</div><div class="td" style="left:1007px;top:714.5px">74</div><div class="track" style="top:719.0px"></div><div class="bar" style="top:719.0px;width:62px"></div>
<div class="td" style="left:259px;top:763px">Article 5 - Governance and Organisation</div><div class="td" style="left:655px;top:763px">168</div><div class="td" style="left:764px;top:763px">0</div><div class="td" style="left:874.5px;top:763px">-</div><div class="td" style="left:1007px;top:763px">47</div><div class="track" style="top:767px"></div><div class="bar" style="top:767px;width:37px"></div>
<div class="td" style="left:259px;top:809.5px">Article 8 - Identification</div><div class="td" style="left:655px;top:809.5px">146</div><div class="td" style="left:764px;top:809.5px">0</div><div class="td" style="left:874.5px;top:809.5px">-</div><div class="td" style="left:1007px;top:809.5px">41</div><div class="track" style="top:814.0px"></div><div class="bar" style="top:814.0px;width:19px"></div>
<div class="td" style="left:259px;top:857.5px">Article 19 - Reporting of Major ICT-Related Incidents</div><div class="td" style="left:655px;top:857.5px">3</div><div class="td" style="left:764px;top:857.5px">0</div><div class="td" style="left:874.5px;top:857.5px">-</div><div class="td" style="left:1007px;top:857.5px">7</div><div class="track" style="top:862.0px"></div><div class="bar" style="top:862.0px;width:7px"></div>
<div class="rowline" style="top:699px"></div><div class="rowline" style="top:746px"></div><div class="rowline" style="top:794px"></div><div class="rowline" style="top:842px"></div>
<div class="a" style="left:0;top:843px;width:1255px;height:34px;background:linear-gradient(rgba(0,0,0,0),rgba(0,0,0,0.075))"></div>
</body></html>
